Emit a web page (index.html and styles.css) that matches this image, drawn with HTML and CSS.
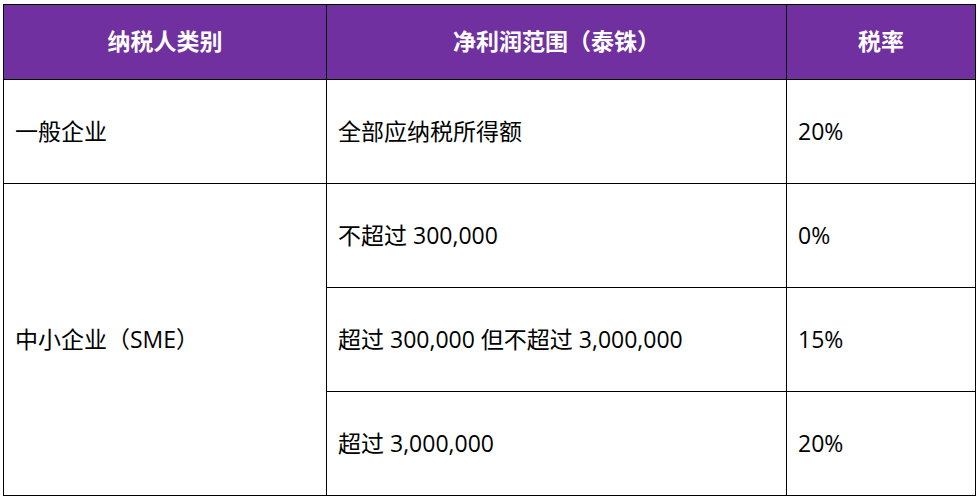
FILE: index.html
```html
<!DOCTYPE html>
<html lang="zh-CN">
<head>
<meta charset="utf-8">
<link rel="stylesheet" href="styles.css">
</head>
<body>
<div class="page">
<table class="tax">
  <colgroup>
    <col class="c1"><col class="c2"><col class="c3">
  </colgroup>
  <thead>
    <tr class="head">
      <th>纳税人类别</th>
      <th>净利润范围（泰铢）</th>
      <th>税率</th>
    </tr>
  </thead>
  <tbody>
    <tr>
      <td>一般企业</td>
      <td>全部应纳税所得额</td>
      <td>20%</td>
    </tr>
    <tr>
      <td rowspan="3">中小企业（SME）</td>
      <td>不超过 300,000</td>
      <td>0%</td>
    </tr>
    <tr>
      <td>超过 300,000 但不超过 3,000,000</td>
      <td>15%</td>
    </tr>
    <tr>
      <td>超过 3,000,000</td>
      <td>20%</td>
    </tr>
  </tbody>
</table>
</div>
</body>
</html>
```
FILE: styles.css
```css
html, body {
  margin: 0;
  padding: 0;
  background: #ffffff;
}
.page {
  padding: 4px 2px 0 3px;
}
.tax {
  border-collapse: collapse;
  width: 972px;
  table-layout: fixed;
  font-family: "Open Sans", "Noto Sans CJK SC", sans-serif;
  color: #000;
}
.c1 { width: 323px; }
.c2 { width: 460px; }
.c3 { width: 189px; }
.tax th, .tax td {
  border: 1px solid #000;
  vertical-align: middle;
  padding: 0 11px;
  font-size: 23px;
  line-height: 1.2;
}
.head th {
  background: #7030a0;
  color: #fff;
  font-weight: 700;
  text-align: center;
  height: 75px;
  box-sizing: border-box;
}
.tax td {
  height: 104px;
  box-sizing: border-box;
  text-align: left;
}
```
